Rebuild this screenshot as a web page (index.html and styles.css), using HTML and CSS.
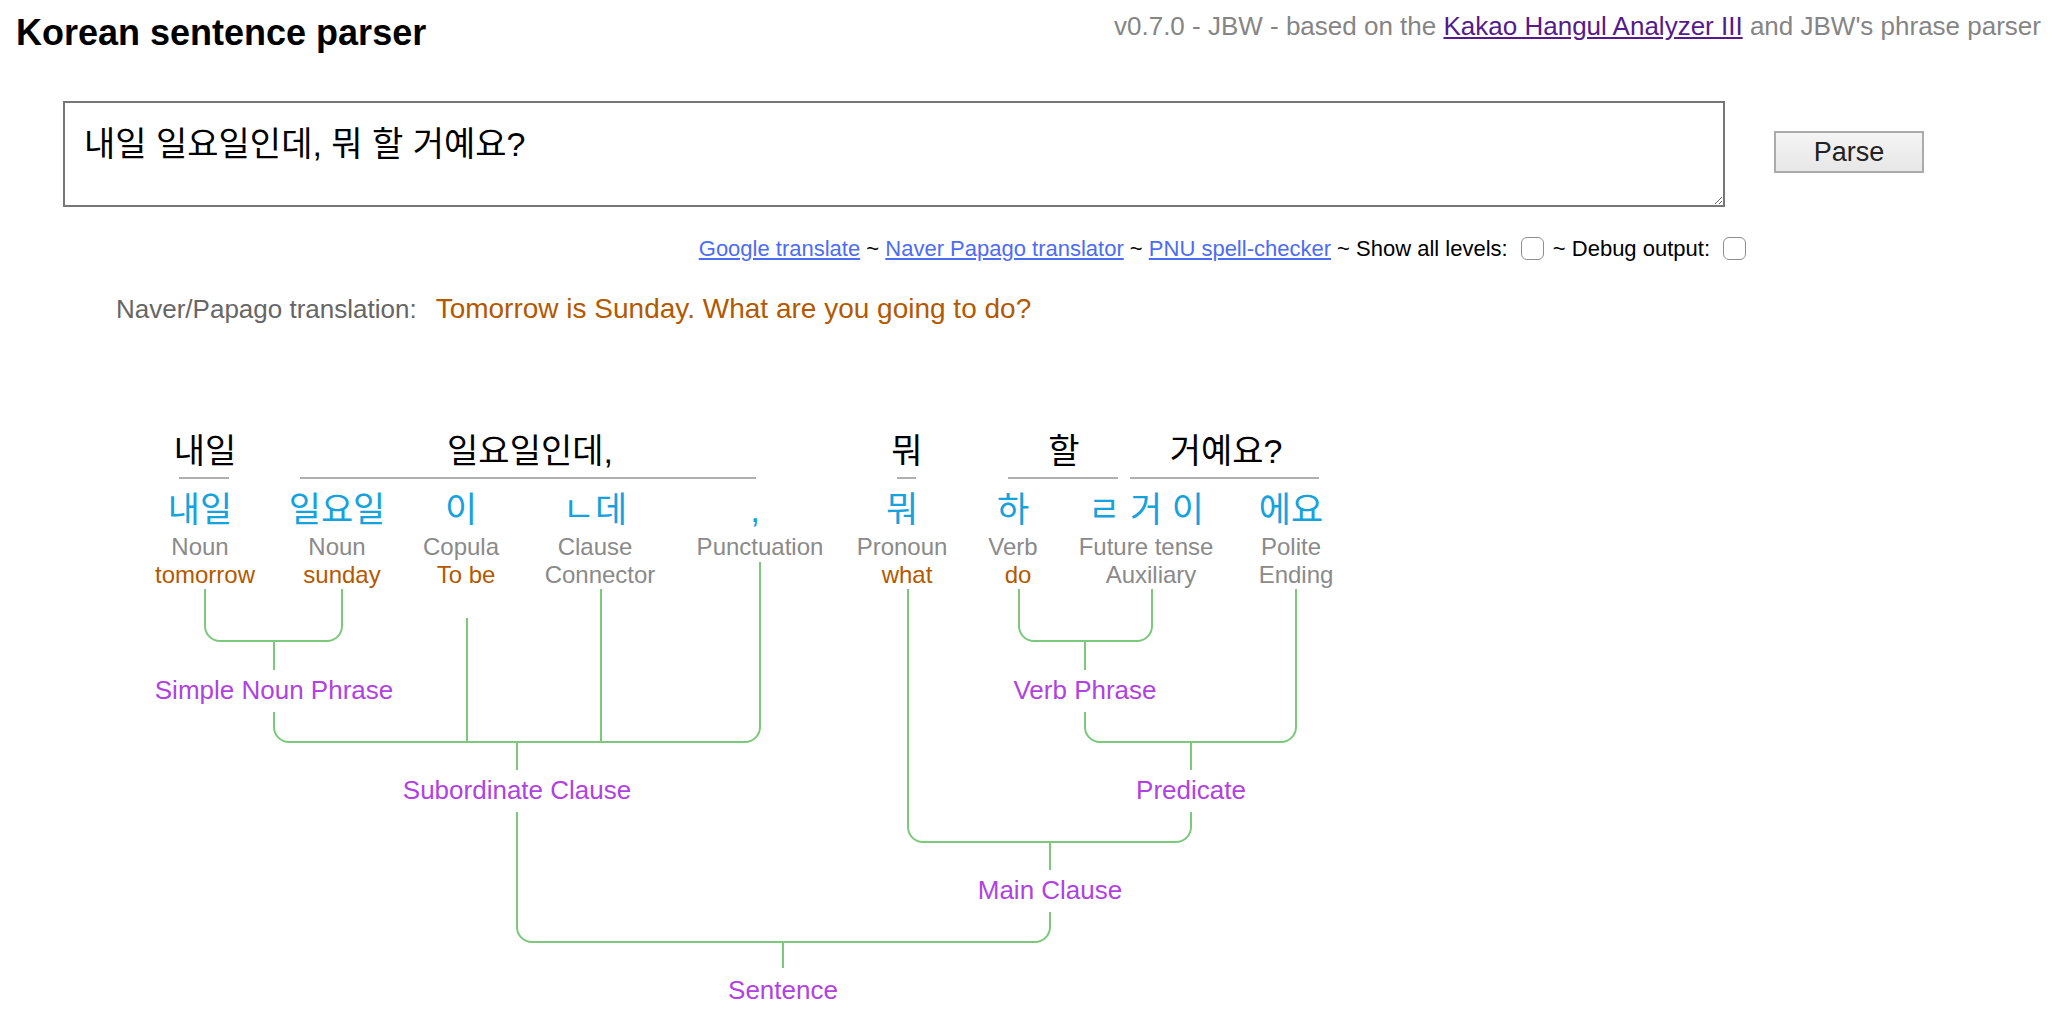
FILE: index.html
```html
<!DOCTYPE html>
<html lang="en">
<head>
<meta charset="utf-8">
<title>Korean sentence parser</title>
<link rel="stylesheet" href="styles.css">
</head>
<body>
<header class="top">
  <h1 class="title">Korean sentence parser</h1>
  <div class="credit">v0.7.0 - JBW - based on the <a href="#" class="visited">Kakao Hangul Analyzer III</a> and JBW's phrase parser</div>
</header>

<div class="input-row">
  <textarea class="sentence">내일 일요일인데, 뭐 할 거예요?</textarea>
  <button class="parse" type="button">Parse</button>
</div>

<div class="links">
  <a href="#">Google translate</a> ~ <a href="#">Naver Papago translator</a> ~ <a href="#">PNU spell-checker</a> ~ Show all levels:<input type="checkbox" class="check"> ~ Debug output:<input type="checkbox" class="check">
</div>

<div class="translation">
  <span class="tlabel">Naver/Papago translation:</span><span class="ttext">Tomorrow is Sunday. What are you going to do?</span>
</div>

<div class="diagram">
  <svg class="wires" width="1400" height="630" viewBox="0 0 1400 630">
    <g class="under">
      <line x1="179" y1="78" x2="229" y2="78"/>
      <line x1="300" y1="78" x2="756" y2="78"/>
      <line x1="897" y1="78" x2="916" y2="78"/>
      <line x1="1008" y1="78" x2="1118" y2="78"/>
      <line x1="1130" y1="78" x2="1319" y2="78"/>
    </g>
    <g class="tree">
      <path d="M205 189 V226 A15 15 0 0 0 220 241 H327 A15 15 0 0 0 342 226 V189"/>
      <path d="M274 241 V270"/>
      <path d="M274 312 V327 A15 15 0 0 0 289 342 H745 A15 15 0 0 0 760 327 V162"/>
      <path d="M467 218 V342"/>
      <path d="M601 189 V342"/>
      <path d="M517 342 V370"/>
      <path d="M1019 189 V226 A15 15 0 0 0 1034 241 H1137 A15 15 0 0 0 1152 226 V189"/>
      <path d="M1085 241 V270"/>
      <path d="M1085 312 V327 A15 15 0 0 0 1100 342 H1281 A15 15 0 0 0 1296 327 V189"/>
      <path d="M1191 342 V370"/>
      <path d="M908 189 V427 A15 15 0 0 0 923 442 H1176 A15 15 0 0 0 1191 427 V412"/>
      <path d="M1050 442 V470"/>
      <path d="M517 412 V527 A15 15 0 0 0 532 542 H1035 A15 15 0 0 0 1050 527 V512"/>
      <path d="M783 542 V568"/>
    </g>
  </svg>

  <div class="word" style="--x:205px">내일</div>
  <div class="word" style="--x:530px">일요일인데,</div>
  <div class="word" style="--x:907px">뭐</div>
  <div class="word" style="--x:1064px">할</div>
  <div class="word" style="--x:1226px">거예요?</div>

  <div class="leaf" style="--x:205px">
    <span class="morph shift">내일</span>
    <span class="pos shift">Noun</span>
    <span class="pos gloss">tomorrow</span>
  </div>
  <div class="leaf" style="--x:342px">
    <span class="morph shift">일요일</span>
    <span class="pos shift">Noun</span>
    <span class="pos gloss">sunday</span>
  </div>
  <div class="leaf" style="--x:466px">
    <span class="morph shift">이</span>
    <span class="pos shift">Copula</span>
    <span class="pos gloss">To be</span>
  </div>
  <div class="leaf" style="--x:600px">
    <span class="morph shift">ㄴ데</span>
    <span class="pos shift">Clause</span>
    <span class="pos">Connector</span>
  </div>
  <div class="leaf" style="--x:760px">
    <span class="morph shift">,</span>
    <span class="pos">Punctuation</span>
  </div>
  <div class="leaf" style="--x:907px">
    <span class="morph shift">뭐</span>
    <span class="pos shift">Pronoun</span>
    <span class="pos gloss">what</span>
  </div>
  <div class="leaf" style="--x:1018px">
    <span class="morph shift">하</span>
    <span class="pos shift">Verb</span>
    <span class="pos gloss">do</span>
  </div>
  <div class="leaf" style="--x:1151px">
    <span class="morph shift">ㄹ 거 이</span>
    <span class="pos shift">Future tense</span>
    <span class="pos">Auxiliary</span>
  </div>
  <div class="leaf" style="--x:1296px">
    <span class="morph shift">에요</span>
    <span class="pos shift">Polite</span>
    <span class="pos">Ending</span>
  </div>

  <div class="phrase" style="--x:274px;--y:290px">Simple Noun Phrase</div>
  <div class="phrase" style="--x:1085px;--y:290px">Verb Phrase</div>
  <div class="phrase" style="--x:517px;--y:390px">Subordinate Clause</div>
  <div class="phrase" style="--x:1191px;--y:390px">Predicate</div>
  <div class="phrase" style="--x:1050px;--y:490px">Main Clause</div>
  <div class="phrase" style="--x:783px;--y:590px">Sentence</div>
</div>
</body>
</html>
```

FILE: styles.css
```css
* { box-sizing: border-box; }

html, body {
  margin: 0;
  padding: 0;
  background: #ffffff;
}

body {
  font-family: "Liberation Sans", "Noto Sans CJK KR", Arial, sans-serif;
  color: #000;
  overflow: hidden;
}

.top {
  display: flex;
  justify-content: space-between;
  align-items: flex-start;
  height: 60px;
  padding: 11px 11px 0 16px;
}

.title {
  margin: 2px 0 0;
  font-size: 36px;
  line-height: 40px;
  font-weight: bold;
}

.credit {
  font-size: 26px;
  line-height: 30px;
  color: #858585;
}

.credit .visited {
  color: #551a8b;
  text-decoration: underline;
}

.input-row {
  display: flex;
  align-items: flex-start;
  margin-top: 41px;
  height: 106px;
  padding-left: 63px;
}

.sentence {
  width: 1662px;
  height: 106px;
  border: 2px solid #767676;
  padding: 20px 19px 10px;
  font-family: "Liberation Sans", "Noto Sans CJK KR", sans-serif;
  font-size: 34px;
  line-height: 42px;
  color: #000;
  background: #fff;
  resize: both;
  outline: none;
}

.parse {
  margin: 30px 0 0 49px;
  width: 150px;
  height: 42px;
  border: 2px solid #ababab;
  border-radius: 0;
  background: linear-gradient(#f4f4f4, #e7e7e7);
  font-family: "Liberation Sans", sans-serif;
  font-size: 27px;
  line-height: 36px;
  color: #222;
  padding: 0;
}

.links {
  margin-top: 27px;
  height: 30px;
  width: 1746px;
  text-align: right;
  font-size: 22px;
  line-height: 30px;
  white-space: nowrap;
}

.links a {
  color: #4d6cf4;
  text-decoration: underline;
}

.check {
  -webkit-appearance: none;
  appearance: none;
  width: 23px;
  height: 23px;
  margin: 0 3px 0 13px;
  border: 1px solid #8e8e8e;
  border-radius: 6px;
  background: #fff;
  vertical-align: -4px;
}

.check:last-child {
  margin-right: 0;
}

.translation {
  margin-top: 28px;
  height: 34px;
  line-height: 34px;
  padding-left: 116px;
  white-space: nowrap;
}

.tlabel {
  font-size: 26px;
  color: #666;
}

.ttext {
  margin-left: 19px;
  font-size: 28px;
  color: #b35900;
}

.diagram {
  position: relative;
  margin-top: 74px;
  height: 630px;
}

.wires {
  position: absolute;
  left: 0;
  top: 0;
  overflow: visible;
}

.under line {
  stroke: #b0b0b0;
  stroke-width: 2;
}

.tree path {
  fill: none;
  stroke: #7cc97c;
  stroke-width: 2;
}

.word {
  position: absolute;
  left: var(--x);
  top: 29px;
  transform: translateX(-50%);
  font-size: 34px;
  line-height: 44px;
  white-space: nowrap;
  color: #000;
}

.leaf {
  position: absolute;
  left: var(--x);
  top: 86px;
  transform: translateX(-50%);
  display: flex;
  flex-direction: column;
  align-items: center;
  white-space: nowrap;
}

.morph {
  font-size: 35px;
  line-height: 44px;
  margin-top: 2px;
  margin-bottom: 1px;
  color: #15a2dd;
}

.pos {
  font-size: 24px;
  line-height: 28px;
  color: #8a8a8a;
}

.pos.gloss {
  color: #b35900;
}

.shift {
  margin-right: 10px;
}

.phrase {
  position: absolute;
  left: var(--x);
  top: var(--y);
  transform: translate(-50%, -50%);
  font-size: 26px;
  line-height: 30px;
  color: #b042e2;
  white-space: nowrap;
}
```
